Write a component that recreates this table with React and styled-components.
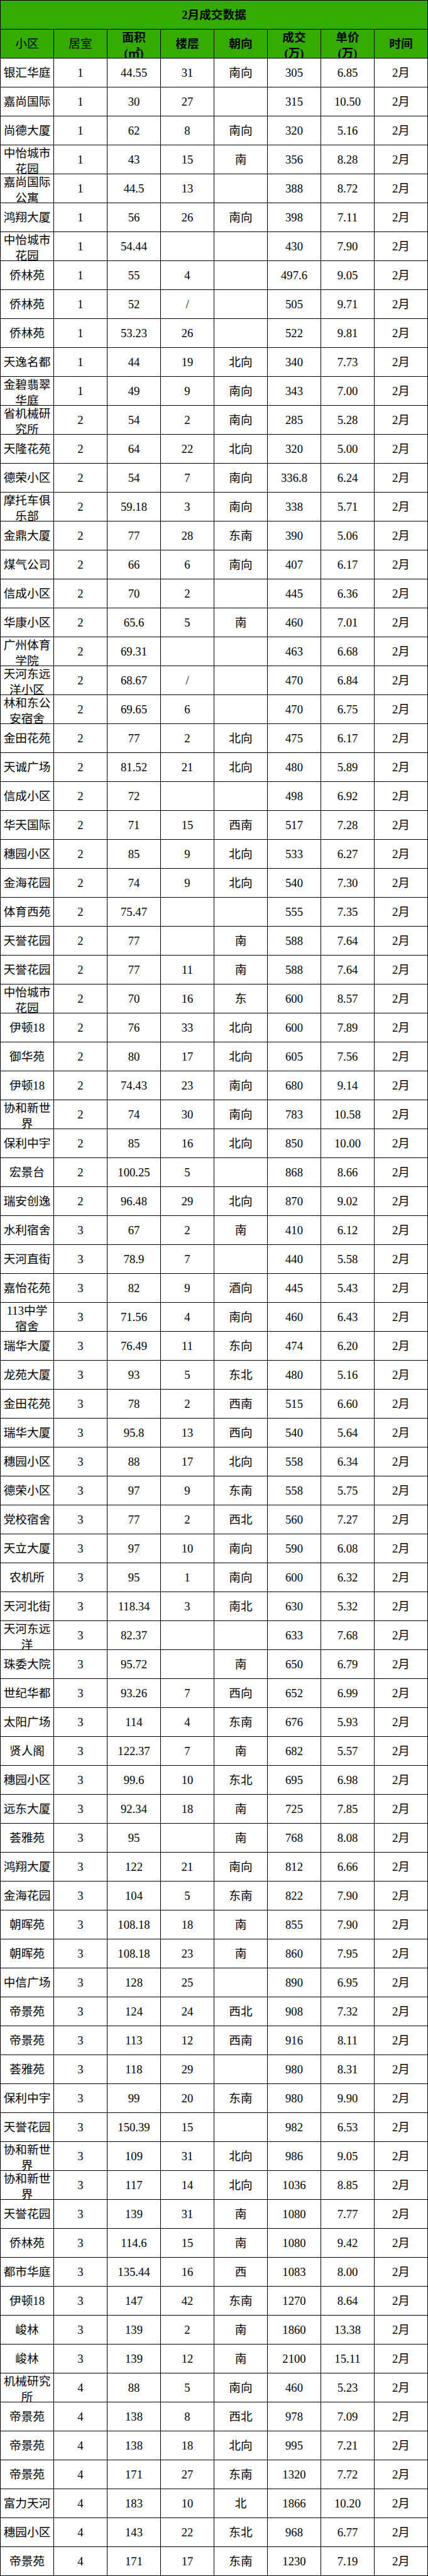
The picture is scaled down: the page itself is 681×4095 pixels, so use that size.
import React from "react";
import styled, { createGlobalStyle } from "styled-components";

const GREEN = "#35aa00";

const GlobalStyle = createGlobalStyle`
  html, body { margin: 0; padding: 0; background: #ffffff; }
  body { width: 681px; }
`;

const Sheet = styled.div`
  width: 681px;
  box-sizing: border-box;
  display: grid;
  grid-template-columns: repeat(8, 85px);
  grid-auto-rows: 46px;
  border-left: 1px solid #000;
  border-top: 1px solid #000;
  font-family: "Liberation Serif", "Noto Sans CJK SC", serif;
  font-size: 18.67px;
  line-height: 25px;
  color: #000;
`;

const Cell = styled.div`
  box-sizing: border-box;
  border-right: 1px solid #000;
  border-bottom: 1px solid #000;
  padding: 0 2px;
  overflow: hidden;
  display: flex;
  flex-direction: column;
  justify-content: safe center;
  text-align: center;
  background: ${(p) => (p.$head ? GREEN : "#ffffff")};
  font-weight: ${(p) => (p.$bold ? 700 : 400)};
`;

const TitleCell = styled(Cell)`
  grid-column: 1 / -1;
`;

const Label = styled.div`
  display: block;
`;

const headers = [
  { lines: ["小区"], bold: false },
  { lines: ["居室"], bold: false },
  { lines: ["面积", "(㎡)"], bold: true },
  { lines: ["楼层"], bold: true },
  { lines: ["朝向"], bold: true },
  { lines: ["成交", "(万)"], bold: true },
  { lines: ["单价", "(万)"], bold: true },
  { lines: ["时间"], bold: true },
];

const raw = `银汇华庭,1,44.55,31,南向,305,6.85
嘉尚国际,1,30,27,,315,10.50
尚德大厦,1,62,8,南向,320,5.16
中怡城市花园,1,43,15,南,356,8.28
嘉尚国际公寓,1,44.5,13,,388,8.72
鸿翔大厦,1,56,26,南向,398,7.11
中怡城市花园,1,54.44,,,430,7.90
侨林苑,1,55,4,,497.6,9.05
侨林苑,1,52,/,,505,9.71
侨林苑,1,53.23,26,,522,9.81
天逸名都,1,44,19,北向,340,7.73
金碧翡翠华庭,1,49,9,南向,343,7.00
省机械研究所,2,54,2,南向,285,5.28
天隆花苑,2,64,22,北向,320,5.00
德荣小区,2,54,7,南向,336.8,6.24
摩托车俱乐部,2,59.18,3,南向,338,5.71
金鼎大厦,2,77,28,东南,390,5.06
煤气公司,2,66,6,南向,407,6.17
信成小区,2,70,2,,445,6.36
华康小区,2,65.6,5,南,460,7.01
广州体育学院,2,69.31,,,463,6.68
天河东远洋小区,2,68.67,/,,470,6.84
林和东公安宿舍,2,69.65,6,,470,6.75
金田花苑,2,77,2,北向,475,6.17
天诚广场,2,81.52,21,北向,480,5.89
信成小区,2,72,,,498,6.92
华天国际,2,71,15,西南,517,7.28
穗园小区,2,85,9,北向,533,6.27
金海花园,2,74,9,北向,540,7.30
体育西苑,2,75.47,,,555,7.35
天誉花园,2,77,,南,588,7.64
天誉花园,2,77,11,南,588,7.64
中怡城市花园,2,70,16,东,600,8.57
伊顿18,2,76,33,北向,600,7.89
御华苑,2,80,17,北向,605,7.56
伊顿18,2,74.43,23,南向,680,9.14
协和新世界,2,74,30,南向,783,10.58
保利中宇,2,85,16,北向,850,10.00
宏景台,2,100.25,5,,868,8.66
瑞安创逸,2,96.48,29,北向,870,9.02
水利宿舍,3,67,2,南,410,6.12
天河直街,3,78.9,7,,440,5.58
嘉怡花苑,3,82,9,酒向,445,5.43
113中学宿舍,3,71.56,4,南向,460,6.43
瑞华大厦,3,76.49,11,东向,474,6.20
龙苑大厦,3,93,5,东北,480,5.16
金田花苑,3,78,2,西南,515,6.60
瑞华大厦,3,95.8,13,西向,540,5.64
穗园小区,3,88,17,北向,558,6.34
德荣小区,3,97,9,东南,558,5.75
党校宿舍,3,77,2,西北,560,7.27
天立大厦,3,97,10,南向,590,6.08
农机所,3,95,1,南向,600,6.32
天河北街,3,118.34,3,南北,630,5.32
天河东远洋,3,82.37,,,633,7.68
珠委大院,3,95.72,,南,650,6.79
世纪华都,3,93.26,7,西向,652,6.99
太阳广场,3,114,4,东南,676,5.93
贤人阁,3,122.37,7,南,682,5.57
穗园小区,3,99.6,10,东北,695,6.98
远东大厦,3,92.34,18,南,725,7.85
荟雅苑,3,95,,南,768,8.08
鸿翔大厦,3,122,21,南向,812,6.66
金海花园,3,104,5,东南,822,7.90
朝晖苑,3,108.18,18,南,855,7.90
朝晖苑,3,108.18,23,南,860,7.95
中信广场,3,128,25,,890,6.95
帝景苑,3,124,24,西北,908,7.32
帝景苑,3,113,12,西南,916,8.11
荟雅苑,3,118,29,,980,8.31
保利中宇,3,99,20,东南,980,9.90
天誉花园,3,150.39,15,,982,6.53
协和新世界,3,109,31,北向,986,9.05
协和新世界,3,117,14,北向,1036,8.85
天誉花园,3,139,31,南,1080,7.77
侨林苑,3,114.6,15,南,1080,9.42
都市华庭,3,135.44,16,西,1083,8.00
伊顿18,3,147,42,东南,1270,8.64
峻林,3,139,2,南,1860,13.38
峻林,3,139,12,南,2100,15.11
机械研究所,4,88,5,南向,460,5.23
帝景苑,4,138,8,西北,978,7.09
帝景苑,4,138,18,北向,995,7.21
帝景苑,4,171,27,东南,1320,7.72
富力天河,4,183,10,北,1866,10.20
穗园小区,4,143,22,东北,968,6.77
帝景苑,4,171,17,东南,1230,7.19`;

const rows = raw.split("\n").map((line) => [...line.split(","), "2月"]);

export default function App() {
  return (
    <>
      <GlobalStyle />
      <Sheet>
        <TitleCell $head $bold>
          <Label>2月成交数据</Label>
        </TitleCell>
        {headers.map((h, i) => (
          <Cell key={`h${i}`} $head $bold={h.bold}>
            <Label>
              {h.lines.map((l, j) => (
                <React.Fragment key={j}>
                  {j > 0 && <br />}
                  {l}
                </React.Fragment>
              ))}
            </Label>
          </Cell>
        ))}
        {rows.map((r, i) =>
          r.map((v, j) => (
            <Cell key={`${i}-${j}`}>
              <Label>{v}</Label>
            </Cell>
          ))
        )}
      </Sheet>
    </>
  );
}
